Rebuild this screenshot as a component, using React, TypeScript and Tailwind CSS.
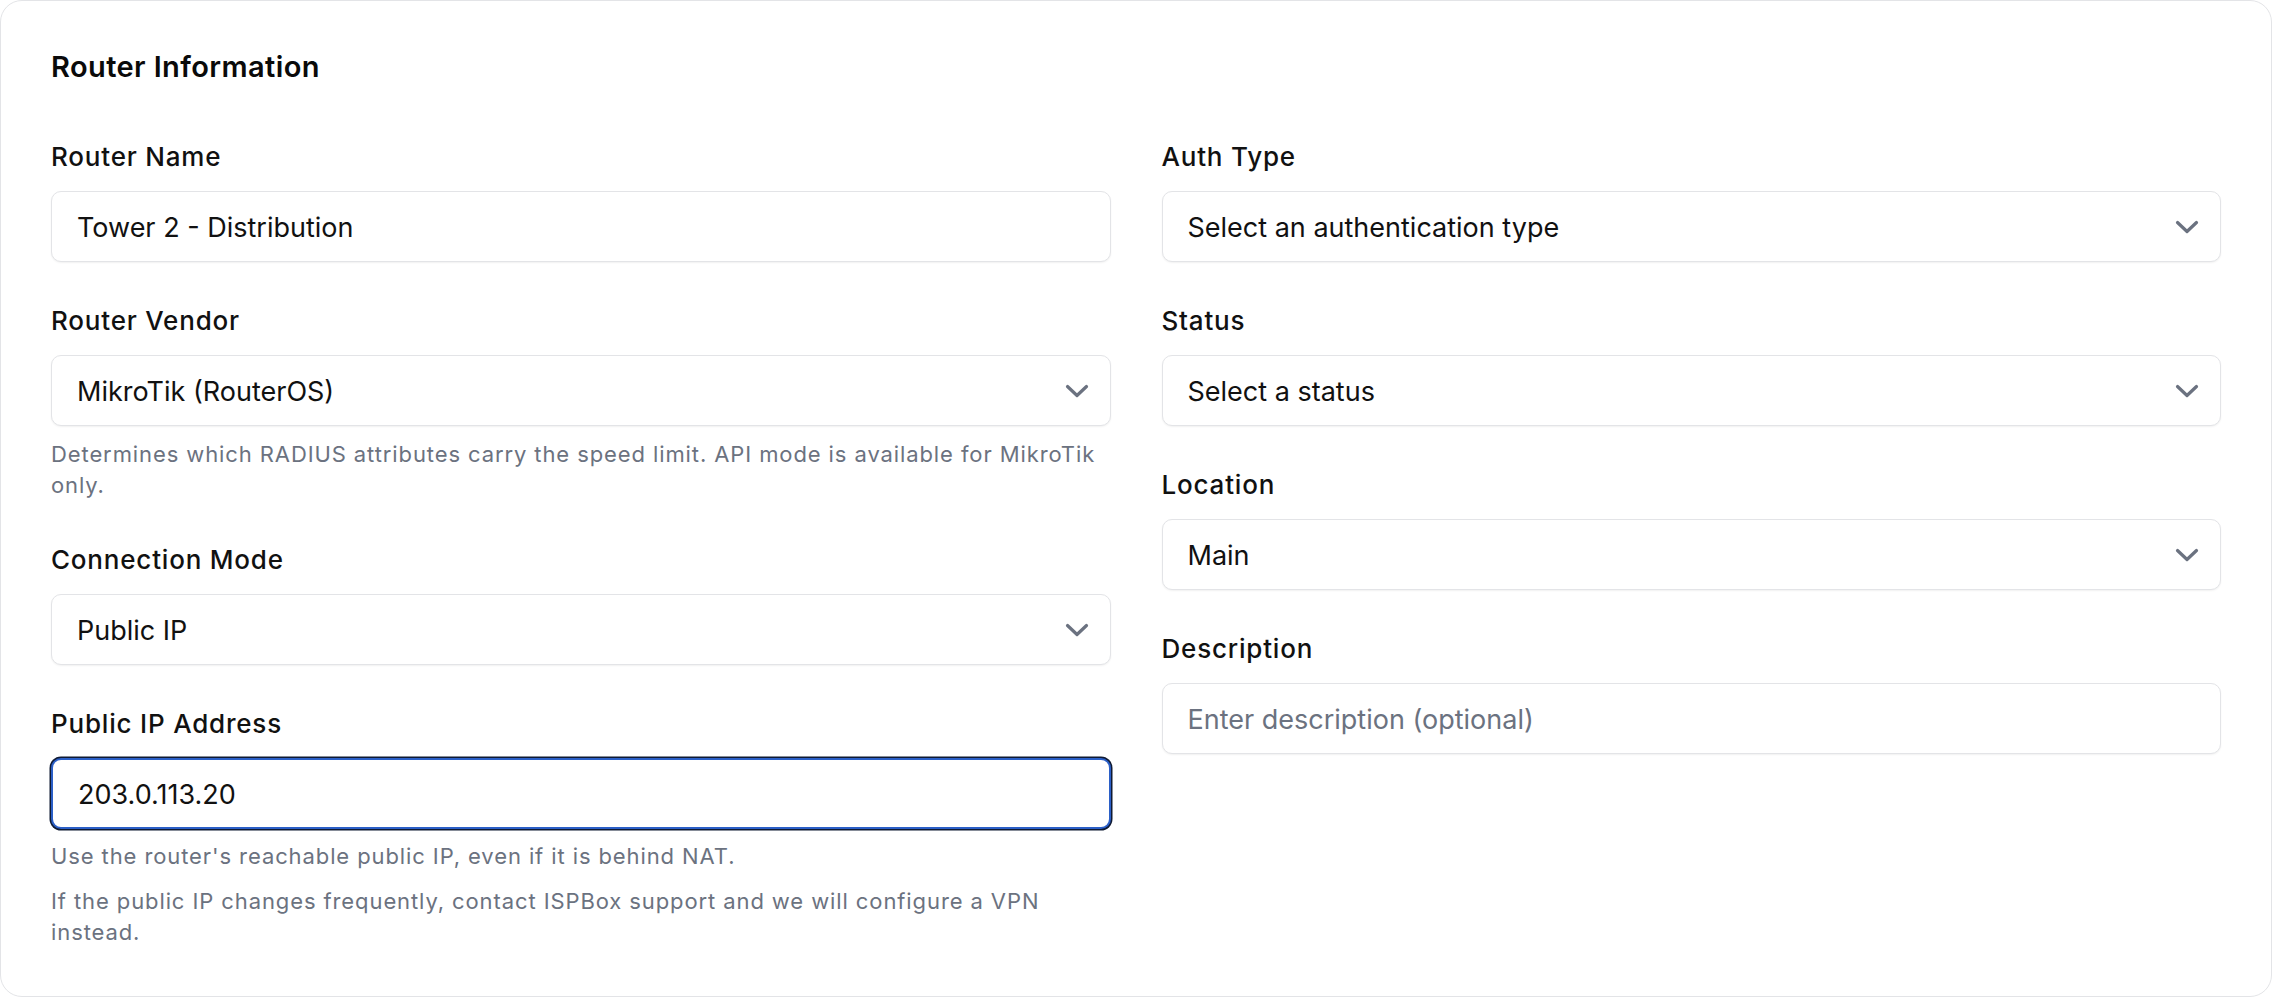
import type { ReactNode } from 'react';

const font = { fontFamily: 'Inter, "Noto Sans", sans-serif' };

function Chevron() {
  return (
    <svg width="24" height="14" viewBox="0 0 24 14" fill="none" className="shrink-0">
      <path d="M2.5 2.5 L12 11.5 L21.5 2.5" stroke="#6b7280" strokeWidth="3.2" strokeLinecap="round" strokeLinejoin="round" />
    </svg>
  );
}

function Label({ children }: { children: ReactNode }) {
  return (
    <div className="text-[26px] leading-[36px] font-medium tracking-[0.8px] text-[#111111] mb-[16px]">{children}</div>
  );
}

function Help({ children, className = '' }: { children: ReactNode; className?: string }) {
  return <p className={`text-[22px] leading-[31px] tracking-[0.9px] text-[#6b7280] ${className}`}>{children}</p>;
}

function TextBox({ value, placeholder, focused }: { value?: string; placeholder?: string; focused?: boolean }) {
  return (
    <div
      className={`h-[71px] rounded-[10px] bg-white flex items-center px-[25px] pt-[3px] text-[27px] ${
        focused
          ? 'border-2 border-[#2b5fc7] shadow-[0_0_0_1.5px_#0f1a33]'
          : 'border border-[#e3e4e7] shadow-[0_1px_2px_rgba(0,0,0,0.06)]'
      }`}
    >
      {value ? <span className="text-[#111111]">{value}</span> : <span className="text-[#6b7280]">{placeholder}</span>}
    </div>
  );
}

function SelectBox({ value }: { value: string }) {
  return (
    <div className="h-[71px] rounded-[10px] bg-white border border-[#e3e4e7] shadow-[0_1px_2px_rgba(0,0,0,0.06)] flex items-center justify-between pl-[25px] pr-[21px] text-[27px] text-[#111111]">
      <span className="pt-[3px]">{value}</span>
      <Chevron />
    </div>
  );
}

export default function App() {
  return (
    <div className="bg-white w-[2272px]" style={font}>
      <div className="border border-[#e3e4e7] rounded-[22px] px-[50px] pt-[48px] pb-[48px]">
        <h2 className="text-[29px] leading-[36px] font-semibold tracking-[0.4px] text-[#0a0a0a] mb-[54px]">
          Router Information
        </h2>
        <div className="grid grid-cols-2 gap-x-[51px]">
          {/* Left column */}
          <div className="flex flex-col gap-[41px]">
            <div>
              <Label>Router Name</Label>
              <TextBox value="Tower 2 - Distribution" />
            </div>
            <div>
              <Label>Router Vendor</Label>
              <SelectBox value="MikroTik (RouterOS)" />
              <Help className="mt-[13px]">
                Determines which RADIUS attributes carry the speed limit. API mode is available for MikroTik only.
              </Help>
            </div>
            <div>
              <Label>Connection Mode</Label>
              <SelectBox value="Public IP" />
            </div>
            <div>
              <Label>Public IP Address</Label>
              <TextBox value="203.0.113.20" focused />
              <Help className="mt-[12px]">Use the router's reachable public IP, even if it is behind NAT.</Help>
              <Help className="mt-[14px]">
                If the public IP changes frequently, contact ISPBox support and we will configure a VPN instead.
              </Help>
            </div>
          </div>

          {/* Right column */}
          <div className="flex flex-col gap-[41px]">
            <div>
              <Label>Auth Type</Label>
              <SelectBox value="Select an authentication type" />
            </div>
            <div>
              <Label>Status</Label>
              <SelectBox value="Select a status" />
            </div>
            <div>
              <Label>Location</Label>
              <SelectBox value="Main" />
            </div>
            <div>
              <Label>Description</Label>
              <TextBox placeholder="Enter description (optional)" />
            </div>
          </div>
        </div>
      </div>
    </div>
  );
}
